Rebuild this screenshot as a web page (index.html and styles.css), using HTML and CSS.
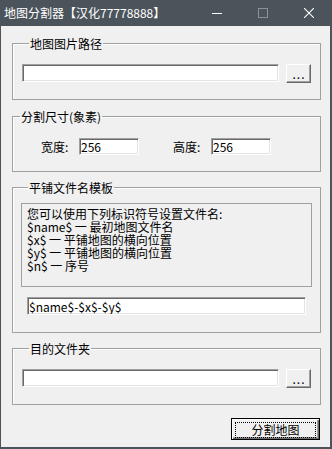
FILE: index.html
```html
<!DOCTYPE html>
<html lang="zh-CN">
<head>
    <meta charset="UTF-8" />
    <title>地图分割器</title>
    <link rel="stylesheet" href="styles.css">
</head>
<body>

<div class="window">
    <div class="titlebar">
        <span class="title">地图分割器【汉化77778888】</span>
        <div class="controls">
            <span class="ctl">
                <svg width="10" height="10" viewBox="0 0 10 10"><path d="M0 5.5h10" stroke="#fff" stroke-width="1"/></svg>
            </span>
            <span class="ctl">
                <svg width="10" height="10" viewBox="0 0 10 10"><rect x="0.5" y="0.5" width="9" height="9" fill="none" stroke="#8c9297" stroke-width="1"/></svg>
            </span>
            <span class="ctl">
                <svg width="10" height="10" viewBox="0 0 10 10"><path d="M0 0L10 10M10 0L0 10" stroke="#fff" stroke-width="1.1"/></svg>
            </span>
        </div>
    </div>

    <div class="client">
        <fieldset class="group g-source">
            <legend>地图图片路径</legend>
            <div class="path-row">
                <input type="text" class="field path">
                <button class="btn browse">...</button>
            </div>
        </fieldset>

        <fieldset class="group g-size">
            <legend>分割尺寸(象素)</legend>
            <div class="size-row">
                <label class="size-label">宽度:</label>
                <input type="text" class="field size" value="256">
                <label class="size-label second">高度:</label>
                <input type="text" class="field size" value="256">
            </div>
        </fieldset>

        <fieldset class="group g-template">
            <legend>平铺文件名模板</legend>
            <div class="hint">
                您可以使用下列标识符号设置文件名:<br>
                $name$ 一 最初地图文件名<br>
                $x$ 一 平铺地图的横向位置<br>
                $y$ 一 平铺地图的横向位置<br>
                $n$ 一 序号
            </div>
            <input type="text" class="field template" value="$name$-$x$-$y$">
        </fieldset>

        <fieldset class="group g-target">
            <legend>目的文件夹</legend>
            <div class="path-row">
                <input type="text" class="field path">
                <button class="btn browse">...</button>
            </div>
        </fieldset>

        <div class="actions">
            <button class="btn default"><span class="focus">分割地图</span></button>
        </div>
    </div>
</div>

</body>
</html>
```

FILE: styles.css
```css
body {
    margin: 0;
    font-family: "Noto Sans CJK SC", sans-serif;
    font-size: 12px;
    color: #000;
    background: #f0f0f0;
}

.window {
    width: 329px;
    height: 447px;
    border: solid #4b545b;
    border-width: 0 2px 2px 1px;
    background: #f0f0f0;
}

.titlebar {
    height: 26px;
    margin: 0 -2px 0 -1px;
    background: #4b545b;
    display: flex;
    align-items: center;
    justify-content: space-between;
}

.title {
    color: #fff;
    padding-left: 4px;
    line-height: 26px;
}

.controls {
    display: flex;
}

.ctl {
    width: 46px;
    height: 26px;
    display: flex;
    align-items: center;
    justify-content: center;
}

.ctl svg {
    display: block;
}

.client {
    padding: 10px 9px 0 11px;
}

.group {
    margin: 0;
    border: 1px solid #a0a0a0;
    box-shadow: inset 1px 1px 0 #fff;
    padding: 0;
}

.group legend {
    margin-left: 7px;
    padding: 0 1px;
    line-height: 15px;
    height: 15px;
}

.g-source, .g-target {
    padding: 13px 9px 16px 9px;
}

.g-size {
    margin-top: 9px;
    padding: 14px 0 16px 0;
}

.g-template {
    margin-top: 8px;
    padding: 8px 8px 17px 8px;
}

.g-target {
    margin-top: 8px;
}

.path-row {
    display: flex;
    gap: 7px;
}

.field {
    box-sizing: border-box;
    height: 18px;
    margin: 0;
    padding: 0 1px;
    border: 1px solid;
    border-color: #a0a0a0 #fff #fff #a0a0a0;
    box-shadow: inset 1px 1px 0 #696969, inset -1px -1px 0 #e3e3e3;
    background: #fff;
    font-family: "Noto Sans CJK SC", sans-serif;
    font-size: 12px;
    color: #000;
    outline: none;
}

.path {
    width: 257px;
}

.size-row {
    display: flex;
    align-items: center;
    padding-left: 28px;
}

.size-label {
    width: 38px;
}

.size-label.second {
    margin-left: 34px;
}

.size {
    width: 60px;
    height: 17px;
}

.hint {
    box-sizing: border-box;
    height: 84px;
    border: 1px solid #a0a0a0;
    padding: 3px 5px 0 5px;
    line-height: 13px;
}

.template {
    display: block;
    width: 279px;
    margin: 10px 6px 0 6px;
}

.btn {
    box-sizing: border-box;
    margin: 0;
    padding: 0;
    background: #f0f0f0;
    border: 1px solid;
    border-color: #fff #696969 #696969 #fff;
    box-shadow: inset -1px -1px 0 #a0a0a0;
    font-family: "Noto Sans CJK SC", sans-serif;
    font-size: 12px;
    color: #000;
}

.browse {
    width: 25px;
    height: 19px;
    line-height: 12px;
    letter-spacing: 1px;
    padding-left: 1px;
}

.actions {
    display: flex;
    justify-content: flex-end;
    padding: 13px 1px 0 0;
}

.btn.default {
    width: 89px;
    height: 22px;
    border: 1px solid #000;
    box-shadow: inset 1px 1px 0 #fff, inset -1px -1px 0 #696969, inset -2px -2px 0 #a0a0a0;
    padding: 3px;
}

.focus {
    display: block;
    height: 14px;
    line-height: 14px;
    border: 1px dotted #000;
}
```
